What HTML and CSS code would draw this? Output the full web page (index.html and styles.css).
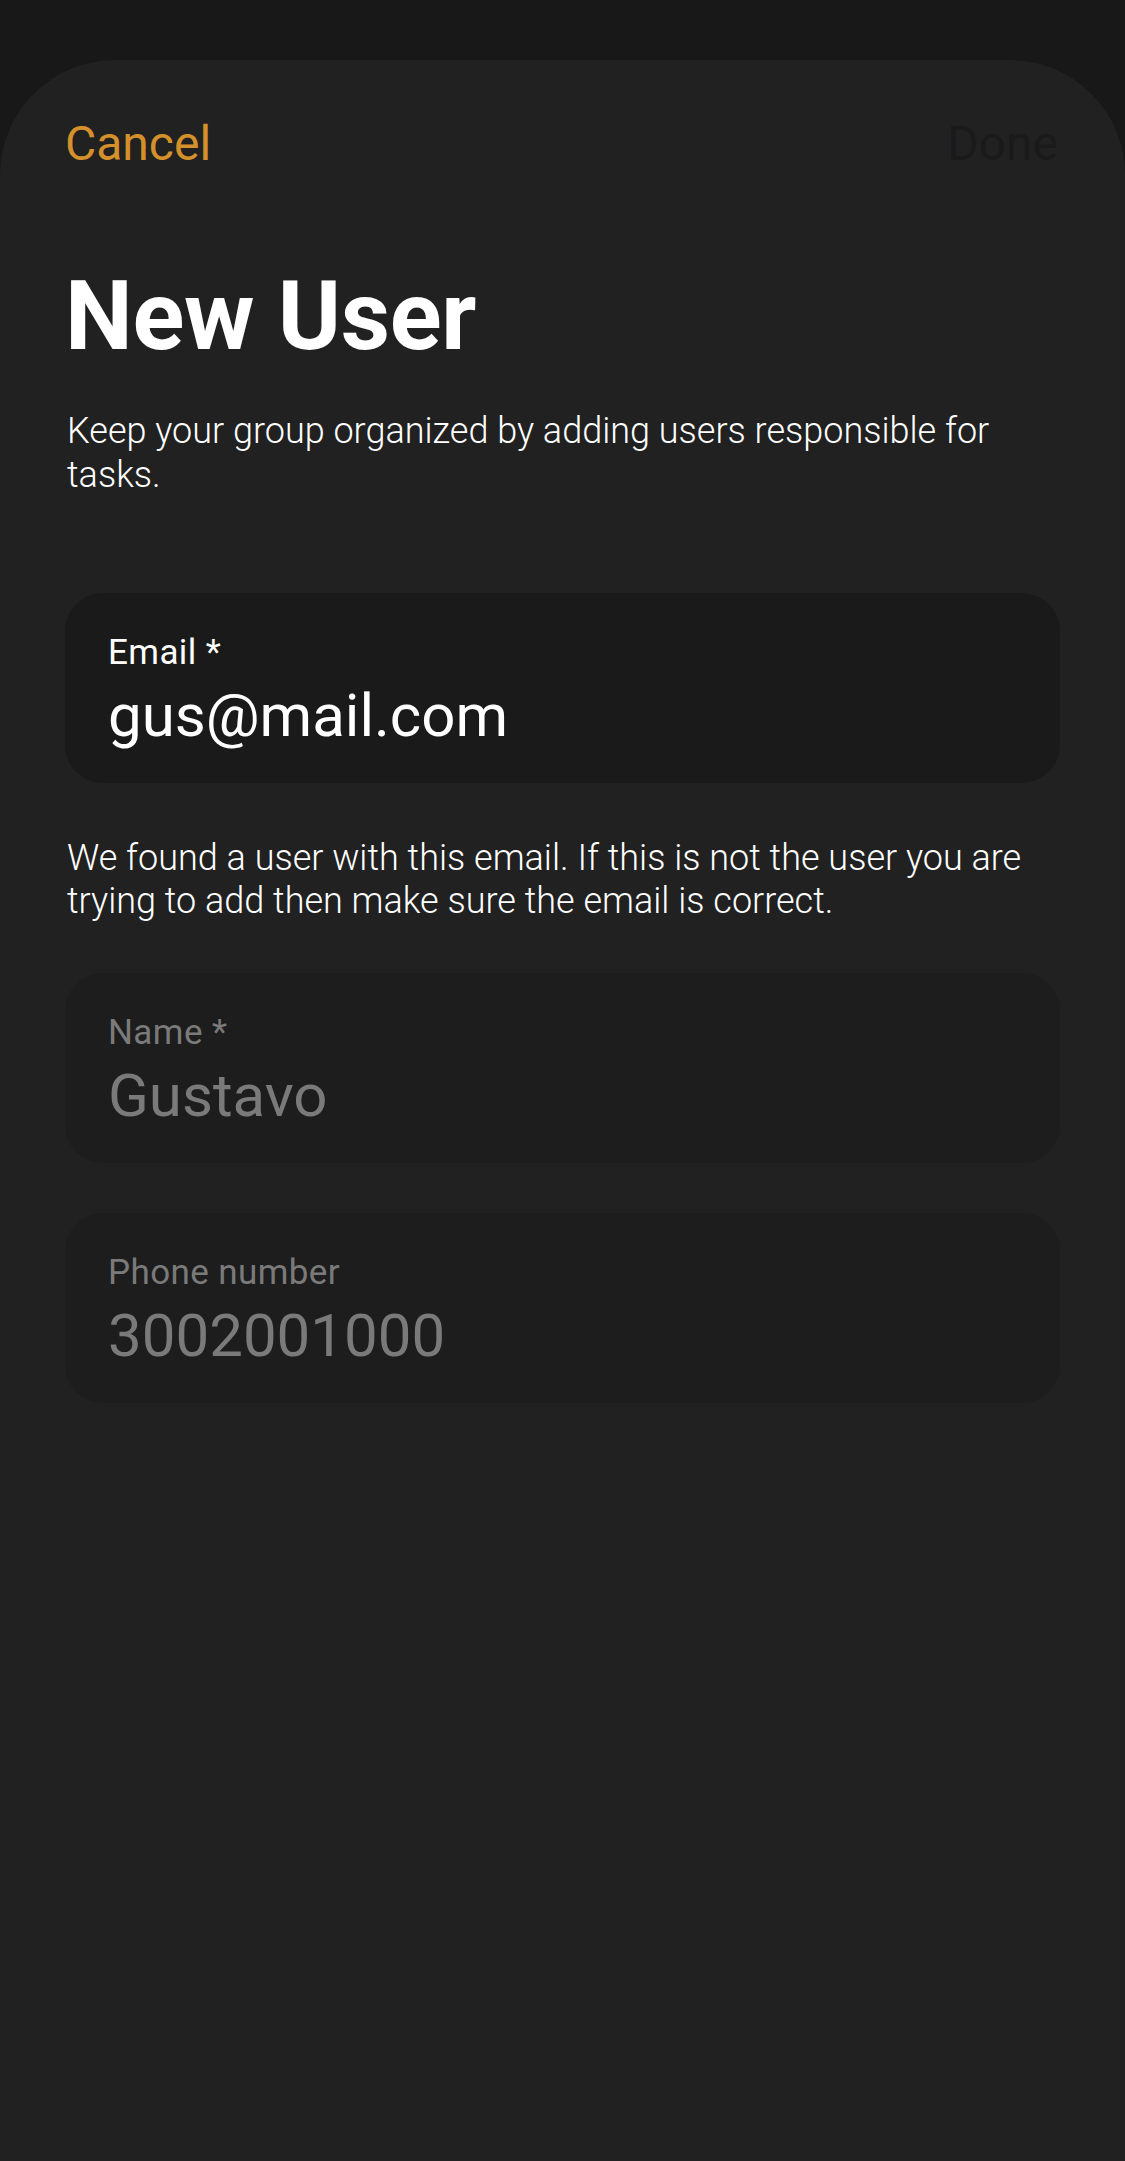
FILE: index.html
```html
<!DOCTYPE html>
<html lang="en">
<head>
<meta charset="utf-8">
<title>New User</title>
<link rel="stylesheet" href="styles.css">
</head>
<body>
<div class="screen">
  <div class="sheet">
    <div class="header">
      <span class="btn btn-cancel">Cancel</span>
      <span class="btn btn-done">Done</span>
    </div>
    <h1 class="title">New User</h1>
    <p class="subtitle">Keep your group organized by adding users responsible for tasks.</p>
    <div class="form">
      <div class="field field-active">
        <div class="field-label">Email *</div>
        <div class="field-value">gus@mail.com</div>
      </div>
      <p class="helper">We found a user with this email. If this is not the user you are trying to add then make sure the email is correct.</p>
      <div class="field field-disabled">
        <div class="field-label">Name *</div>
        <div class="field-value">Gustavo</div>
      </div>
      <div class="field field-disabled">
        <div class="field-label">Phone number</div>
        <div class="field-value">3002001000</div>
      </div>
    </div>
  </div>
</div>
</body>
</html>
```
FILE: styles.css
```css
html, body {
  margin: 0;
  padding: 0;
  background: #181818;
}
body {
  font-family: Roboto, "Noto Sans", "Liberation Sans", sans-serif;
  color: #ffffff;
}
.screen {
  padding-top: 60px;
  min-height: 2101px;
}
.sheet {
  background: #212121;
  border-radius: 115px 115px 0 0;
  min-height: 2101px;
  padding: 56px 65px 0;
  box-sizing: border-box;
}
.header {
  display: flex;
  justify-content: space-between;
  align-items: center;
  height: 56px;
}
.btn {
  font-size: 48px;
  line-height: 56px;
  font-weight: 400;
}
.btn-cancel {
  color: #d4902a;
}
.btn-done {
  color: #1a1a1a;
  padding-right: 2px;
}
.title {
  margin: 88px 0 0;
  font-size: 96px;
  line-height: 112px;
  font-weight: 700;
  letter-spacing: -0.3px;
}
.subtitle {
  margin: 37px 0 0;
  padding: 0 2px 0 2px;
  font-size: 36px;
  line-height: 44px;
  font-weight: 300;
}
.form {
  margin-top: 96px;
  display: flex;
  flex-direction: column;
}
.field {
  height: 190px;
  box-sizing: border-box;
  border-radius: 38px;
  padding: 40px 42px 0 43px;
}
.field-active {
  background: #1a1a1a;
}
.field-disabled {
  background: #1d1d1d;
  margin-bottom: 50px;
}
.field-label {
  font-size: 35px;
  line-height: 40px;
  font-weight: 400;
  letter-spacing: 0.4px;
}
.field-value {
  margin-top: 8px;
  font-size: 60px;
  line-height: 70px;
  font-weight: 400;
}
.field-active .field-label,
.field-active .field-value {
  color: #ffffff;
}
.field-disabled .field-label,
.field-disabled .field-value {
  color: #7a7a7a;
}
.helper {
  margin: 54px 0 50px;
  padding: 0 2px 0 2px;
  font-size: 36px;
  line-height: 43px;
  font-weight: 300;
}
```
